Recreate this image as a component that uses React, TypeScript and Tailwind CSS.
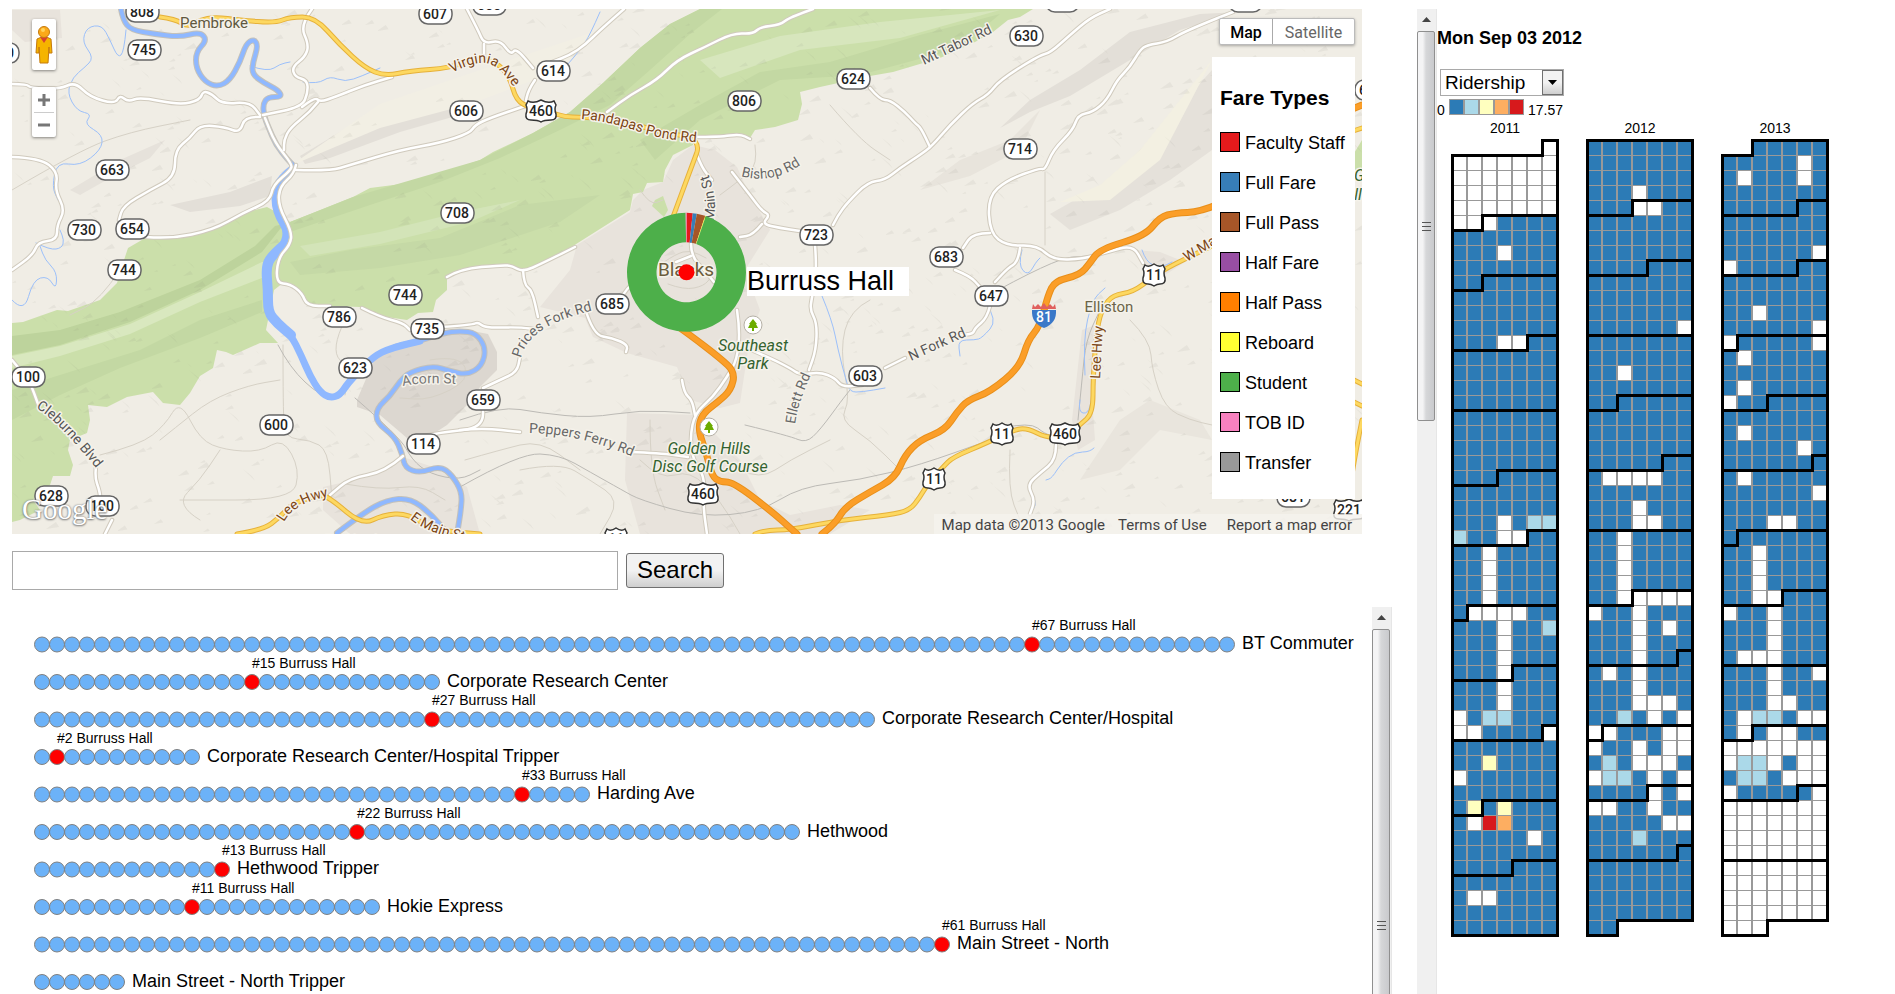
import { useMemo, useState } from "react";

type Point = [number, number];

type Route = {
  name: string;
  stops: number;
  active?: number;
};

const ROUTES: Route[] = [
  { name: "BT Commuter", stops: 80, active: 67 },
  { name: "Corporate Research Center", stops: 27, active: 15 },
  { name: "Corporate Research Center/Hospital", stops: 56, active: 27 },
  { name: "Corporate Research Center/Hospital Tripper", stops: 11, active: 2 },
  { name: "Harding Ave", stops: 37, active: 33 },
  { name: "Hethwood", stops: 51, active: 22 },
  { name: "Hethwood Tripper", stops: 13, active: 13 },
  { name: "Hokie Express", stops: 23, active: 11 },
  { name: "Main Street - North", stops: 61, active: 61 },
  { name: "Main Street - North Tripper", stops: 6 },
];

const FARE_TYPES = [
  { label: "Faculty Staff", color: "bg-[#e41a1c]" },
  { label: "Full Fare", color: "bg-[#377eb8]" },
  { label: "Full Pass", color: "bg-[#a65628]" },
  { label: "Half Fare", color: "bg-[#984ea3]" },
  { label: "Half Pass", color: "bg-[#ff7f00]" },
  { label: "Reboard", color: "bg-[#ffff33]" },
  { label: "Student", color: "bg-[#4daf4a]" },
  { label: "TOB ID", color: "bg-[#f781bf]" },
  { label: "Transfer", color: "bg-[#999999]" },
];

// fare share around the ring, in degrees
const SLICES = [
  { from: 0, to: 6, color: "#e41a1c" },
  { from: 6, to: 10, color: "#377eb8" },
  { from: 10, to: 18.3, color: "#a65628" },
  { from: 18.3, to: 19, color: "#ffff33" },
  { from: 19, to: 359.2, color: "#4daf4a" },
  { from: 359.2, to: 360, color: "#f781bf" },
];

const SCALE: Record<string, string> = {
  b: "#2c7bb6",
  l: "#abd9e9",
  y: "#ffffbf",
  o: "#fdae61",
  r: "#d7191c",
  w: "#ffffff",
};

const EMPTY = "wwwwwww";

// week -> one letter per weekday; weeks that are left out are all "b"
const YEARS: { year: number; weeks: Record<number, string> }[] = [
  {
    year: 2011,
    weeks: {
      0: EMPTY, 1: EMPTY, 2: EMPTY, 3: EMPTY, 4: EMPTY,
      5: "wwwbbbb", 7: "bbbwbbb", 13: "bbbwwbb", 25: "bbbwbll", 26: "lbbwwbb",
      27: "bbwbbbb", 28: "bbwbbbb", 29: "bbwbbbb", 30: "bbwbbbb", 31: "bwwwwbb",
      32: "bbbwbbl", 33: "bbbwbbb", 34: "bbbwbbb", 35: "bbbwbbb", 36: "bbbwbbb",
      37: "bbbwbbb", 38: "wbllbbb", 39: "wwbbbbw", 41: "bbybbbb", 42: "wbbbbbb",
      44: "bybybbb", 45: "bwrobbb", 46: "bbbbbwb", 50: "bwwbbbb",
    },
  },
  {
    year: 2012,
    weeks: {
      3: "bbbwbbb", 4: "bbbwwbb", 12: "bbbbbbw", 15: "bbwbbbb", 22: "bwwwwbb",
      24: "bbbwbbb", 25: "bbbwwbb", 26: "bbwbbbb", 27: "bbwbbbb", 28: "bbwbbbb",
      29: "bbwbbbb", 30: "bbwwwww", 31: "wbbwbbb", 32: "bbbwbwb", 33: "bbbwbbb",
      34: "bbbwbbb", 35: "bwbwbbb", 36: "bbbwbbb", 37: "bbbwwwb", 38: "bblbwbw",
      39: "wwbbbww", 40: "wbbwbww", 41: "blbwwwb", 42: "wllbwbw", 43: "bbbbwbw",
      44: "wwbbwbb", 45: "bbbbbww", 46: "bbblbbb",
    },
  },
  {
    year: 2013,
    weeks: {
      1: "bbbbbwb", 2: "bwbbbwb", 7: "bbbbbbw", 8: "wbbbbbb", 11: "bbwbbbb",
      12: "bbbbbbw", 13: "wbbbbbw", 14: "bwbbbbb", 16: "bwbbbbb", 17: "wbbbbbb",
      19: "bwbbbbb", 20: "bbbbbwb", 22: "bwbbbbb", 23: "bbbbbbw", 25: "bbbwwbb",
      27: "bbwbbbb", 28: "bbwbbbb", 29: "bbwbbbb", 30: "bbwwbbb", 31: "wbbwbbb",
      32: "bbbwbbb", 33: "bbbwbbb", 34: "bwwwbbb", 35: "bbbwbbw", 36: "bbbwbbb",
      37: "bbbwwbb", 38: "bwllbww", 39: "bwbwwbb", 40: EMPTY, 41: "wllwbww",
      42: "bllbwww", 43: "wbbbbbw", 44: EMPTY, 45: EMPTY, 46: EMPTY, 47: EMPTY,
      48: EMPTY, 49: EMPTY, 50: EMPTY, 51: EMPTY, 52: EMPTY,
    },
  },
];

const CELL = 15;

function dayOfYear(d: Date) {
  return Math.round((d.getTime() - Date.UTC(d.getUTCFullYear(), 0, 1)) / 86400000);
}

function weekOf(d: Date) {
  const first = new Date(Date.UTC(d.getUTCFullYear(), 0, 1)).getUTCDay();
  return Math.floor((dayOfYear(d) + first) / 7);
}

function monthPath(year: number, month: number) {
  const a = new Date(Date.UTC(year, month, 1));
  const b = new Date(Date.UTC(year, month + 1, 0));
  const w0 = weekOf(a) * CELL;
  const w1 = weekOf(b) * CELL;
  const d0 = a.getUTCDay() * CELL;
  const d1 = (b.getUTCDay() + 1) * CELL;
  const right = 7 * CELL;
  return `M${d0} ${w0}H${right}V${w1}H${d1}V${w1 + CELL}H0V${w0 + CELL}H${d0}Z`;
}

function YearCalendar({ year, weeks }: { year: number; weeks: Record<number, string> }) {
  const days = useMemo(() => {
    const out: { key: number; x: number; y: number; fill: string }[] = [];
    for (let i = 0; i < 366; i++) {
      const d = new Date(Date.UTC(year, 0, 1 + i));
      if (d.getUTCFullYear() !== year) break;
      const w = weekOf(d);
      const c = d.getUTCDay();
      out.push({ key: i, x: c * CELL, y: w * CELL, fill: SCALE[weeks[w]?.[c] ?? "b"] });
    }
    return out;
  }, [year, weeks]);

  return (
    <svg width={135} height={820} className="shrink-0" role="img" aria-label={`${year}`}>
      <text x={68} y={13} textAnchor="middle" className="text-[14px]">
        {year}
      </text>
      <g transform="translate(15 20)">
        {days.map((d) => (
          <rect key={d.key} x={d.x - 1} y={d.y} width={17} height={16} fill="#999" />
        ))}
        {days.map((d) => (
          <rect key={d.key} x={d.x + 1} y={d.y + 1} width={13} height={14} fill={d.fill} />
        ))}
        <g transform="translate(.5 .5)" fill="none" stroke="#000" strokeWidth={3}>
          {Array.from({ length: 12 }, (_, m) => (
            <path key={m} d={monthPath(year, m)} />
          ))}
        </g>
      </g>
    </svg>
  );
}

function ScaleLegend() {
  return (
    <svg width={150} height={21} className="mt-[3px] block text-[14px]" role="img" aria-label="Scale from 0 to 17.57">
      <text x={0} y={16}>0</text>
      <rect x={12} y={0} width={75} height={16} fill="#999" />
      {["b", "l", "y", "o", "r"].map((k, i) => (
        <rect key={k} x={13 + i * 15} y={1} width={13} height={14} fill={SCALE[k]} />
      ))}
      <text x={91} y={16}>17.57</text>
    </svg>
  );
}

function Scrollbar({ size }: { size: "page" | "routes" }) {
  return (
    <div aria-hidden className="flex w-5 shrink-0 flex-col overflow-hidden border-r border-[#e6e6e6] bg-[#f0f0f0]">
      <div className="flex h-5 w-[18px] shrink-0 items-center justify-center">
        <svg width={9} height={5} viewBox="0 0 9 5">
          <path d="M0 5L4.500 0L9 5Z" fill="#444" />
        </svg>
      </div>
      <div
        className={`mt-0.5 flex w-[18px] shrink-0 flex-col items-center justify-center gap-[3px] rounded-[2px] border border-[#8f8f8f] bg-linear-to-r from-[#f4f4f5] from-30% via-[#d6d7d9] via-50% to-[#c9cacd] ${
          size === "page" ? "h-[390px]" : "h-[592px]"
        }`}
      >
        <span className="h-px w-[9px] bg-[#555]" />
        <span className="h-px w-[9px] bg-[#555]" />
        <span className="h-px w-[9px] bg-[#555]" />
      </div>
    </div>
  );
}

function line(points: string) {
  return points
    .trim()
    .split(/\s+/)
    .map((p) => p.split(",").map(Number) as Point);
}

// rounded polyline through the midpoints
function smooth(points: string) {
  const p = line(points);
  let d = `M${p[0]}`;
  for (let i = 1; i < p.length - 1; i++) {
    const mid = [(p[i][0] + p[i + 1][0]) / 2, (p[i][1] + p[i + 1][1]) / 2];
    d += `Q${p[i]} ${mid}`;
  }
  return d + `L${p[p.length - 1]}`;
}

const FOREST =
  "123,263 128,248 147,237 170,239 213,230 243,213 267,207 280,214 290,222 313,213 353,197 370,188 417,182 443,173 480,160 493,152 533,133 570,112 603,83 640,48 670,24 700,9 1033,9 1020,17 1008,20 993,32 975,42 940,58 893,72 870,76 820,87 800,92 802,104 798,120 775,127 755,130 750,138 740,135 693,137 693,145 673,155 665,170 663,182 647,183 643,192 633,194 630,210 573,246 545,263 527,270 503,265 460,269 447,277 447,290 436,300 433,312 418,313 407,320 380,316 360,307 307,305 300,290 283,283 274,290 266,330 278,343 260,343 233,355 226,352 217,350 213,368 200,376 190,393 180,405 163,403 153,392 127,397 107,407 88,405 90,420 87,433 70,440 68,450 73,465 70,476 53,476 50,485 40,490 33,500 40,510 20,520 12,522 12,323 23,322 57,310 68,311 100,300 117,283";

const TOWNS = [
  "693,145 673,160 663,182 643,190 633,200 630,212 577,245 570,270 540,307 585,318 593,337 627,353 677,367 690,400 720,408 740,403 750,337 760,310 745,270 770,230 745,185 737,167 715,150",
  "627,413 697,415 740,460 760,500 790,515 840,505 870,510 830,534 640,534 625,480",
  "323,487 367,477 403,457 433,467 467,487 480,534 350,534 323,510",
  "12,10 60,10 62,38 25,42 12,30",
  "1133,250 1160,252 1185,262 1165,275 1140,262",
  "1082,330 1095,325 1092,400 1095,440 1078,450 1072,420",
];

const PLANT =
  "357,400 377,353 427,340 467,330 488,334 497,352 497,370 480,387 470,402 447,425 430,436 407,438 380,415 357,407";

const RIDGES = [
  { d: "12,336 60,330 120,312 200,280 255,246 275,226 284,224 262,252 200,290 130,322 60,345 12,355", fill: "#bdd39c" },
  { d: "12,390 60,375 140,350 200,320 262,300 262,312 200,338 120,368 60,395 12,420", fill: "#c3d8a3" },
  { d: "480,160 533,133 570,112 603,83 640,48 670,24 700,9 722,9 690,34 650,70 610,105 560,130 500,158 440,182 370,205 290,232 290,222 353,197", fill: "#c3d8a3" },
  { d: "640,140 700,105 760,72 830,62 920,35 1000,14 960,48 860,75 780,80 700,120 655,160", fill: "#c3d8a3" },
  { d: "290,262 350,250 440,238 520,205 600,195 560,222 460,255 380,268 300,275", fill: "#c5d9a6" },
  { d: "12,356 60,346 130,324 200,292 262,262 272,262 262,278 200,302 130,334 60,356 12,368", fill: "#d9e8bf" },
  { d: "700,60 780,36 880,22 1000,10 900,38 800,50 720,78", fill: "#d7e6bd" },
  { d: "300,246 380,232 460,212 520,200 470,222 380,244 310,256", fill: "#d3e4b8" },
  { d: "300,156 340,132 400,118 450,106 470,112 400,132 330,158 305,164", fill: "#e3dfd8" },
  { d: "170,205 230,192 272,176 270,196 240,206 190,212", fill: "#e3dfd8" },
  { d: "70,190 120,160 165,140 150,158 110,178 80,195", fill: "#e6e2db" },
  { d: "1000,128 1030,100 1080,70 1130,32 1200,14 1240,12 1180,30 1120,66 1070,96 1030,112", fill: "#e3dfd8" },
  { d: "1050,214 1110,180 1150,140 1212,70 1212,150 1170,180 1120,210 1070,230", fill: "#e5e1da" },
  { d: "920,190 960,160 1010,140 1040,110 1020,150 970,176", fill: "#e8e4dc" },
  { d: "1080,480 1120,420 1150,400 1200,420 1212,440 1160,430 1120,470", fill: "#e9e5dd" },
  { d: "1060,202 1100,185 1140,150 1212,60 1160,160 1110,200", fill: "#f3f0e2" },
  { d: "290,166 380,104 480,70 600,30 560,70 470,104 380,128", fill: "#f2efe4" },
];

const RIVER_WIDE =
  "293,168 280,178 275,192 275,205 279,218 287,230 284,245 271,256 266,268 268,290 268,312 277,323 291,335 301,355 310,376 320,392 330,398 340,395 348,383 362,368 377,354 395,347 420,341";

const RIVERS = [
  "121,9 123,20 131,30 155,34 180,37 200,32 207,40 196,52 196,68 205,82 218,87 230,80 240,62 246,44 254,39 258,46 253,62 252,74 264,83 278,90 282,97 268,97 263,104 264,116 268,126 276,145 288,160 294,166",
  "395,347 420,341 443,333 460,331 476,333 486,348 482,366 467,375 450,371 433,366 410,372 400,381 390,396 377,408 376,422 395,437 402,453 405,468 420,473 440,466 452,475 462,492 461,510 457,534",
  "337,533 363,513 387,500 410,498 430,513 447,533",
];

const STREAMS = [
  "126,30 124,52 118,58 110,40 102,25 87,27 82,42 94,58 84,68 73,77 67,93 77,111 92,114 84,124 103,135 101,150 80,166 57,162 52,187 58,200",
  "36,243 50,250 62,248 64,240 60,230",
  "12,300 24,313 33,280 48,276 56,290 57,272 45,260 40,246",
  "250,66 268,72 280,64 290,62",
  "303,82 318,84 330,76 345,82 362,76 380,68",
  "600,12 590,35 580,50 568,64",
  "822,296 832,320 838,350 846,380 850,392 862,392 885,388",
  "1022,250 1018,265 1028,276 1036,262 1040,258",
  "1142,250 1146,262 1160,268 1172,262",
  "1085,375 1083,340 1092,300 1105,288",
  "1094,448 1090,452 1075,452 1062,462 1052,478 1046,480",
  "1080,400 1078,412 1088,414 1092,398",
  "1030,492 1038,502 1030,514",
  "986,304 998,320 982,338 975,340 958,340 960,356",
];

const MINOR = [
  "12,190 80,150 130,132 190,120",
  "100,455 140,445 165,425 180,400 200,440 225,450 260,452 283,438 300,470 292,500 180,500",
  "283,345 283,410 285,438 310,440 328,450 332,500",
  "160,440 175,428 210,400 250,385 280,380",
  "120,270 100,300 70,315",
  "345,320 330,350 350,370 345,395",
  "200,520 175,505 200,480 220,450",
  "520,470 560,462 590,480 620,500 600,534",
  "465,460 500,450 540,440 580,470",
  "640,190 650,205 663,200",
  "755,145 758,165 740,180 720,195",
  "830,105 860,140 890,160",
  "870,300 850,310 840,350 850,400 840,420 870,440 900,470",
  "1045,172 1045,245",
  "1130,320 1150,340 1152,370 1165,408 1190,420 1212,425",
  "1010,450 1008,490 1020,520",
  "740,470 760,480 790,460 830,440",
  "640,460 660,480 690,470 720,500 740,534",
  "650,420 650,470 665,510",
  "345,484 380,490 420,485 445,500",
  "430,360 460,355 470,380 430,400 400,398",
  "664,262 676,254 690,250 706,258",
  "668,284 684,290 704,286 712,276",
];

const RAILS = [
  "460,420 500,406 540,413 590,418 640,410 690,413",
  "745,425 790,436 806,443 820,430 842,400 850,390",
  "460,487 520,453 560,455 590,472 622,490 640,500 700,517 760,512 800,487 860,480 920,465 990,440",
  "355,398 400,437 412,460 430,474 460,480 480,470",
  "278,345 290,368 320,396 340,398 360,372",
  "1002,428 1030,422 1045,434 1055,436",
  "1078,420 1082,380 1086,340 1100,310",
  "980,300 1055,258 1090,256",
];

const ROADS = [
  "12,84 27,84 30,88 60,89 75,82 90,97 115,104 120,95 128,102 140,97 180,105 200,100 203,91 212,94 222,104 250,102 260,115",
  "260,117 245,116 240,133 225,127 200,125 190,138 175,150 175,177 150,190 123,206 119,220",
  "146,237 170,239 213,230 243,213 270,201 273,185 291,170 292,164 275,143 265,118",
  "296,165 294,174 280,186 278,205 292,232 290,245 278,258 276,283 290,284 302,293 307,306 330,306",
  "312,9 300,25 309,45 305,57 292,67 295,77 307,80 308,92 302,107 263,115",
  "302,107 315,97 320,102 335,97 365,85 392,77",
  "318,102 310,112 290,128 284,140 284,150",
  "296,170 330,171 350,165 400,150 440,143 470,133 475,125 490,118 525,106",
  "12,157 40,158 58,172 55,190 65,210 57,225 57,240 38,242 33,255 12,270",
  "467,9 478,30 484,44 500,40 511,55 516,48 533,68",
  "484,44 484,58",
  "624,9 600,30 585,45 570,55 552,62",
  "535,80 528,90 525,106",
  "813,9 790,17 780,25 760,27 753,34 733,33 705,47 677,60 657,80 630,95 607,112",
  "693,137 720,137 740,134 750,139",
  "870,88 880,100 890,100 905,112 915,123 921,128 930,147",
  "833,225 838,215 848,202 868,182 885,180 900,168 920,155 932,146 950,125 973,103 988,95 1000,80 1040,55 1050,53 1070,35 1090,18 1110,9",
  "732,172 750,195 762,211 770,215 762,224 780,228 800,231",
  "762,224 753,235 740,237",
  "815,245 817,270 812,297 810,310 817,323 816,350 809,370",
  "1233,12 1187,30 1167,42 1147,45 1140,50 1130,67 1117,80 1107,100 1093,112 1078,115 1073,130 1053,150 1045,170 1040,168 1007,180 988,197 990,233 1007,246 1037,245 1053,260 1083,259 1107,252 1133,245 1143,263",
  "990,233 973,233 963,248",
  "1020,248 1018,262 1008,268 995,282",
  "955,270 970,276 980,287",
  "990,306 987,318 975,328 973,334 960,335",
  "740,345 770,358 790,368 800,375 820,372 835,378 842,387 862,385",
  "885,368 905,358",
  "697,155 702,168 712,180",
  "691,244 691,256 706,272 714,282",
  "691,256 676,262",
  "737,310 740,330 737,360 727,377 713,397 695,413 690,437 693,460 705,477 703,505 707,534",
  "460,430 483,428 520,432",
  "403,456 385,472 350,478 330,495",
  "423,436 443,432 483,428 483,400",
  "630,452 660,453 688,457",
  "483,388 500,380 517,372 520,357",
  "585,308 593,335 613,338 628,345 626,352",
  "620,300 628,286 640,280",
  "440,327 472,325 478,322 485,328 520,327 540,330",
  "523,270 524,285 532,290 538,317",
  "447,277 460,269 503,265 512,266 523,272 543,263 575,247",
  "362,308 380,317 403,323 410,330",
  "682,380 684,393 692,400 695,415",
  "12,360 22,372 30,382 38,404",
  "97,460 94,475 100,492 100,500",
  "112,520 105,534",
  "1056,445 1056,460 1040,473 1027,485 1035,500 1030,514",
];

const HIGHWAYS = [
  "160,17 175,19 188,27 200,20 215,17 240,20 275,23 290,17 315,17 340,45 365,68 385,76 410,71 450,68 475,58 497,62 510,78 516,100 530,108 550,112 565,117 580,117 620,120 660,132 692,137 699,147 694,160 670,225",
  "755,534 765,530 790,530 840,520 890,515 910,510 920,497 927,485 943,467 953,457 987,443 1013,430 1027,428 1047,438 1065,436 1080,425 1093,413 1093,377 1097,327 1103,307 1113,295 1133,292 1153,277 1167,268 1183,260 1220,242",
  "237,534 263,530 280,517 293,503 320,495 330,498 362,525 383,515 407,513 433,530 480,534",
  "1350,378 1362,384",
  "1350,400 1362,406",
  "1362,420 1355,455 1348,500",
  "1350,132 1362,128",
];

const INTERSTATES = [
  "680,328 690,335 720,358 735,372 731,390 718,402 702,414 698,430 707,455 712,476 720,482 733,482 770,510 797,534",
  "822,534 835,524 845,507 870,492 895,478 905,455 920,440 945,430 957,412 968,400 990,392 1020,367 1028,340 1040,326 1048,295 1055,281 1080,275 1090,263 1100,249 1145,236 1160,217 1175,213 1200,212 1240,195",
  "1350,110 1362,105",
];

const OVALS: [string, number, number][] = [
  ["808", 142, 12], ["745", 144, 50], ["730", 2, 53], ["607", 435, 14], ["606", 466, 111],
  ["663", 112, 170], ["730", 84, 230], ["654", 132, 229], ["744", 124, 270], ["708", 457, 213],
  ["614", 553, 71], ["655", 489, 5], ["624", 853, 79], ["806", 744, 101], ["723", 816, 235],
  ["683", 946, 257], ["630", 1026, 36], ["714", 1020, 149], ["647", 991, 296], ["744", 405, 295],
  ["786", 339, 317], ["735", 427, 329], ["623", 355, 368], ["100", 28, 377], ["600", 276, 425],
  ["114", 423, 444], ["628", 51, 496], ["100", 102, 506], ["685", 612, 304], ["659", 483, 400],
  ["603", 865, 376], ["681", 1293, 497], ["697", 1062, 2], ["697", 1245, 2], ["648", 1371, 90],
];

const US_SHIELDS: [string, number, number][] = [
  ["460", 541, 111], ["460", 703, 494], ["11", 1154, 275], ["11", 1002, 434],
  ["11", 934, 479], ["460", 1065, 434], ["221", 1349, 510], ["11", 616, 539],
];

const CURVED: { id: string; text: string; path: string; color: string }[] = [
  { id: "virginia", text: "Virginia Ave", path: "M452 73Q472 62 486 63Q500 65 520 96", color: "#7b4413" },
  { id: "pandapas", text: "Pandapas Pond Rd", path: "M581 119Q608 121 634 130Q662 141 710 143", color: "#7b4413" },
  { id: "bishop", text: "Bishop Rd", path: "M741 176Q776 186 810 158", color: "#666" },
  { id: "main", text: "Main St", path: "M713 221Q720 195 702 160", color: "#555" },
  { id: "tabor", text: "Mt Tabor Rd", path: "M924 65L1005 27", color: "#555" },
  { id: "cleburne", text: "Cleburne Blvd", path: "M36 408Q58 420 104 478", color: "#555" },
  { id: "leehwy", text: "Lee Hwy", path: "M284 522Q294 502 336 495", color: "#7b4413" },
  { id: "emain", text: "E Main St", path: "M410 519Q430 536 485 545", color: "#7b4413" },
  { id: "acorn", text: "Acorn St", path: "M403 386Q425 381 470 385", color: "#777" },
  { id: "prices", text: "Prices Fork Rd", path: "M521 358Q528 324 600 309", color: "#666" },
  { id: "peppers", text: "Peppers Ferry Rd", path: "M529 433Q588 434 648 464", color: "#666" },
  { id: "ellett", text: "Ellett Rd", path: "M795 424Q798 400 818 360", color: "#666" },
  { id: "nfork", text: "N Fork Rd", path: "M911 361L980 330", color: "#555" },
  { id: "lee2", text: "Lee Hwy", path: "M1100 379L1104 310", color: "#7b4413" },
  { id: "wmain", text: "W Main St", path: "M1187 262L1260 217", color: "#7b4413" },
];

// small hill-shade strokes scattered over the terrain
function useHillMarks() {
  return useMemo(() => {
    let seed = 7;
    const rnd = () => {
      seed = (seed * 16807) % 2147483647;
      return seed / 2147483647;
    };
    return Array.from({ length: 1100 }, () => {
      const x = Math.round(12 + rnd() * 1350);
      const y = Math.round(9 + rnd() * 525);
      const l = 3 + rnd() * 7;
      const dir = rnd() > 0.3 ? -0.7 : 0.8;
      return `M${x} ${y}l${l.toFixed(1)} ${(l * dir).toFixed(1)}l${(l / 3).toFixed(1)} ${(l / 2).toFixed(1)}z`;
    }).join("");
  }, []);
}

function arc(from: number, to: number, outer: number, inner: number) {
  const at = (deg: number, r: number) => {
    const a = (deg * Math.PI) / 180;
    return `${(Math.sin(a) * r).toFixed(2)} ${(-Math.cos(a) * r).toFixed(2)}`;
  };
  const large = to - from > 180 ? 1 : 0;
  return `M${at(from, outer)}A${outer} ${outer} 0 ${large} 1 ${at(to, outer)}L${at(to, inner)}A${inner} ${inner} 0 ${large} 0 ${at(from, inner)}Z`;
}

function Strokes({ paths, casing, color, width }: { paths: string[]; casing: string; color: string; width: number }) {
  return (
    <g fill="none" strokeLinecap="round" strokeLinejoin="round">
      {paths.map((p, i) => (
        <path key={i} d={smooth(p)} stroke={casing} strokeWidth={width + 2} />
      ))}
      {paths.map((p, i) => (
        <path key={i} d={smooth(p)} stroke={color} strokeWidth={width} />
      ))}
    </g>
  );
}

function ParkPin({ x, y }: { x: number; y: number }) {
  return (
    <g transform={`translate(${x} ${y})`}>
      <circle r={9} fill="#fff" stroke="#b5b0a6" />
      <path d="M0 -6L4 -1H3L5 3H1V6H-1V3H-5L-3 -1H-4Z" fill="#6cac00" />
    </g>
  );
}

function MapCanvas() {
  const marks = useHillMarks();

  return (
    <svg
      viewBox="12 9 1350 525"
      preserveAspectRatio="xMidYMid slice"
      className="block h-full w-full"
      role="img"
      aria-label="Map of Blacksburg"
      fontFamily="Roboto, sans-serif"
    >
      <rect x={0} y={0} width={1400} height={560} fill="#f0ede5" />
      {TOWNS.map((t, i) => (
        <polygon key={i} points={t} fill="#e8e3dc" />
      ))}
      <polygon points={PLANT} fill="#dcd7d0" />
      <polygon points={FOREST} fill="#cbdfaa" />
      <polygon points="655,200 663,196 668,210 664,217 652,206" fill="#cbdfaa" />
      <polygon points="1350,160 1362,140 1362,170 1354,170" fill="#cbdfaa" />
      {RIDGES.map((r, i) => (
        <polygon key={i} points={r.d} fill={r.fill} />
      ))}
      <path d={marks} fill="#8a8678" opacity={0.09} />

      <g fill="none" strokeLinejoin="round" strokeLinecap="round">
        {MINOR.map((p, i) => (
          <path key={i} d={smooth(p)} stroke="#d6d1c6" strokeWidth={1} />
        ))}
        {RAILS.map((p, i) => (
          <path key={i} d={smooth(p)} stroke="#bcbab5" strokeWidth={1} />
        ))}
        {STREAMS.map((p, i) => (
          <path key={i} d={smooth(p)} stroke="#9cc0fa" strokeWidth={1} />
        ))}
        {RIVERS.map((p, i) => (
          <path key={i} d={smooth(p)} stroke="#c4c1ba" strokeWidth={6} />
        ))}
        {RIVERS.map((p, i) => (
          <path key={i} d={smooth(p)} stroke="#8fb8ff" strokeWidth={4} />
        ))}
        <path d={smooth(RIVER_WIDE)} stroke="#8fb8ff" strokeWidth={7} />
        <path d={smooth("284,245 271,256 266,268 268,290 268,312 277,323 291,335")} stroke="#8fb8ff" strokeWidth={10} />
      </g>

      <Strokes paths={ROADS} casing="#d0cabd" color="#fff" width={2.5} />
      <Strokes paths={HIGHWAYS} casing="#e6b13a" color="#fdd861" width={3} />
      <Strokes paths={INTERSTATES} casing="#e88f1a" color="#fb9e28" width={5} />

      {CURVED.map((c) => (
        <g key={c.id}>
          <path id={c.id} d={c.path} fill="none" />
          <text fontSize={14} fill={c.color} stroke="#f5f2ea" strokeWidth={3} paintOrder="stroke" strokeLinejoin="round">
            <textPath href={`#${c.id}`}>{c.text}</textPath>
          </text>
        </g>
      ))}

      <g textAnchor="middle" stroke="#f5f2ea" strokeWidth={3} paintOrder="stroke" strokeLinejoin="round">
        <text x={214} y={28} fontSize={15} fill="#5f5840">Pembroke</text>
        <text x={1109} y={312} fontSize={15} fill="#6b6448">Elliston</text>
        <text x={351} y={546} fontSize={15} fill="#5f5840">Radford</text>
        <text x={686} y={276} fontSize={19} fill="#6b5c3c">Blacks</text>
        <g fontStyle="italic" fontSize={16} fill="#33622f">
          <text x={753} y={351}>Southeast</text>
          <text x={753} y={369}>Park</text>
          <text x={709} y={454}>Golden Hills</text>
          <text x={710} y={472}>Disc Golf Course</text>
          <text x={1362} y={181}>Gr</text>
          <text x={1358} y={200}>ll</text>
        </g>
      </g>
      <ParkPin x={753} y={325} />
      <ParkPin x={709} y={427} />

      <g fontSize={14} fontWeight={500} textAnchor="middle" fill="#222">
        {OVALS.map(([n, x, y], i) => (
          <g key={i}>
            <rect x={x - 16} y={y - 10} width={33} height={20} rx={9} fill="#fff" stroke="#666" strokeWidth={1.5} />
            <text x={x} y={y + 5}>{n}</text>
          </g>
        ))}
        {US_SHIELDS.map(([n, x, y], i) => {
          const w = n.length > 2 ? 15 : 11;
          return (
            <g key={i}>
              <path
                transform={`translate(${x} ${y})`}
                d={`M${-w + 2} -10Q${-w / 2} -7 0 -11Q${w / 2} -7 ${w - 2} -10L${w} -6Q${w - 2} -2 ${w} 3Q${w + 1} 9 ${w - 5} 9Q3 9 0 11Q-3 9 ${-w + 5} 9Q${-w - 1} 9 ${-w} 3Q${-w + 2} -2 ${-w} -6Z`}
                fill="#fff"
                stroke="#333"
                strokeWidth={1.5}
              />
              <text x={x} y={y + 5}>{n}</text>
            </g>
          );
        })}
        <g transform="translate(1044 315)">
          <path d="M-11 -11L-9 -8L-6 -11L-3 -8L0 -12L3 -8L6 -11L9 -8L11 -11L12 -6H-12Z" fill="#e0605e" />
          <path d="M-12 -5H12Q13 8 0 13Q-13 8 -12 -5Z" fill="#3a78c8" />
          <text x={0} y={7} fill="#fff">81</text>
        </g>
      </g>

      {/* fare ring for the selected stop */}
      <g transform="translate(686.500 272.300)">
        {SLICES.map((s) => (
          <path key={s.from} d={arc(s.from, s.to, 59.5, 30)} fill={s.color} />
        ))}
        <circle r={8} fill="#f00" />
      </g>
      <rect x={747} y={267} width={162} height={29} fill="#fff" />
      <text x={747} y={290} fontSize={27} fontFamily="'Liberation Sans', Arial, sans-serif">
        Burruss Hall
      </text>
    </svg>
  );
}

function MapPanel() {
  return (
    <section className="relative mr-[55px] h-[525px] shrink-0 overflow-hidden">
      <MapCanvas />

      <div className="absolute top-2.5 left-5 flex flex-col items-center gap-[17px]">
        <button
          type="button"
          aria-label="Street View"
          className="flex h-[51px] w-6 items-center justify-center rounded-[2px] bg-white shadow-[0_1px_3px_rgba(0,0,0,0.45)]"
        >
          <svg width={18} height={40} viewBox="0 0 18 40">
            <path d="M2 14Q9 10 16 14L17 28H14V22L13 38H5L4 22V28H1Z" fill="#f5b400" stroke="#c57a0c" />
            <path d="M5 12L9 18L13 12Z" fill="#d9432f" />
            <circle cx={9} cy={7} r={5.500} fill="#fba919" stroke="#c57a0c" />
            <circle cx={8} cy={5} r={2} fill="#ffd45c" />
          </svg>
        </button>
        <div className="flex w-6 flex-col items-center rounded-[2px] bg-white shadow-[0_1px_3px_rgba(0,0,0,0.45)]">
          <button type="button" aria-label="Zoom in" className="flex h-[25px] w-6 items-center justify-center">
            <svg width={12} height={12} viewBox="0 0 12 12">
              <path d="M0 6H12M6 0V12" stroke="#777" strokeWidth={3} />
            </svg>
          </button>
          <span className="h-px w-5 bg-[#ccc]" />
          <button type="button" aria-label="Zoom out" className="flex h-6 w-6 items-center justify-center">
            <svg width={12} height={12} viewBox="0 0 12 12">
              <path d="M0 6H12" stroke="#777" strokeWidth={3} />
            </svg>
          </button>
        </div>
      </div>

      <div className="absolute top-[9px] right-[7px] flex h-[27px] rounded-[2px] border border-[#bbb] bg-white font-[Roboto,sans-serif] text-[16px] leading-[27px] shadow-[0_1px_3px_rgba(0,0,0,0.3)]">
        <button type="button" className="w-[53px] border-r border-[#aaa] font-medium">Map</button>
        <button type="button" className="w-[81px] text-[#666]">Satellite</button>
      </div>

      <div className="absolute top-12 right-[7px] h-[442px] w-[143px] bg-white px-2">
        <h3 className="mt-[29px] text-[21px] leading-6 font-bold">Fare Types</h3>
        <ul className="mt-[22px] flex flex-col gap-5">
          {FARE_TYPES.map((f) => (
            <li key={f.label} className="flex h-5 items-center gap-[5px] text-[18px] leading-[22px] whitespace-nowrap">
              <span className={`h-5 w-5 shrink-0 border border-black ${f.color}`} />
              <span className="pt-0.5">{f.label}</span>
            </li>
          ))}
        </ul>
      </div>

      <div className="absolute bottom-0 left-2.5 font-['Liberation_Serif',serif] text-[29px] leading-[50px] text-white [text-shadow:0_0_2px_#777,0_1px_2px_#777]">
        Google
      </div>
      <div className="absolute right-0 bottom-0 flex h-5 gap-[13px] bg-[#f5f3ee]/80 pr-2.5 pl-2 font-[Roboto,sans-serif] text-[15px] leading-[22px] text-[#444]">
        <span>Map data ©2013 Google</span>
        <a href="#terms">Terms of Use</a>
        <a href="#report" className="ml-[7px]">Report a map error</a>
      </div>
    </section>
  );
}

function RoutesChart() {
  return (
    <svg className="h-[420px] min-w-0 flex-1 overflow-hidden" role="img" aria-label="Stops by route">
      {ROUTES.map((r, row) => {
        const cy = 37.5 * (row + 1);
        const cx = (i: number) => 30 + i * 15;
        return (
          <g key={r.name}>
            {Array.from({ length: r.stops }, (_, i) => (
              <circle
                key={i}
                cx={cx(i)}
                cy={cy}
                r={7.5}
                fill={i + 1 === r.active ? "#f00" : "#6cb2f8"}
                stroke="#808080"
              />
            ))}
            {r.active && (
              <text x={cx(r.active - 1)} y={Math.floor(cy) - 14} className="text-[14px]">
                #{r.active} Burruss Hall
              </text>
            )}
            <text x={cx(r.stops)} y={Math.floor(cy) + 5} className="text-[18px]">
              {r.name}
            </text>
          </g>
        );
      })}
    </svg>
  );
}

export default function App() {
  const [query, setQuery] = useState("");
  const [metric, setMetric] = useState("Ridership");

  return (
    <div className="flex h-screen overflow-hidden bg-white pt-[9px] font-['Liberation_Sans',Arial,sans-serif] text-black">
      <main className="flex min-w-0 flex-1 flex-col pl-3">
        <MapPanel />

        <form className="mt-[17px] flex shrink-0 items-center gap-2" onSubmit={(e) => e.preventDefault()}>
          <input
            type="text"
            aria-label="Search stops"
            value={query}
            onChange={(e) => setQuery(e.target.value)}
            className="h-[39px] w-[606px] border border-[#a9a9a9] px-1 text-[24px]"
          />
          <button
            type="submit"
            className="h-[35px] w-[98px] rounded-[3px] border border-[#707070] bg-linear-to-b from-[#f2f2f2] from-50% to-[#cfcfcf] to-100% pb-0.5 text-[24px] leading-[31px]"
          >
            Search
          </button>
        </form>

        <section className="mt-[17px] mr-[25px] flex min-h-0 flex-1">
          <RoutesChart />
          <Scrollbar size="routes" />
        </section>
      </main>

      <Scrollbar size="page" />

      <aside className="w-[458px] shrink-0">
        <h1 className="mt-[19px] text-[18px] leading-5 font-bold">Mon Sep 03 2012</h1>
        <div className="relative mt-[21px] ml-[3px] h-[27px] w-[124px]">
          <select
            aria-label="Measure"
            value={metric}
            onChange={(e) => setMetric(e.target.value)}
            className="block h-full w-full appearance-none border border-[#a9a9a9] bg-white pl-1 text-[19px] leading-6"
          >
            <option>Ridership</option>
          </select>
          <span className="pointer-events-none absolute top-px right-px flex h-[25px] w-[21px] items-center justify-center border border-[#707070] bg-linear-to-b from-[#f2f2f2] from-50% to-[#cfcfcf]">
            <svg width={9} height={5} viewBox="0 0 9 5">
              <path d="M0 0H9L4.500 5Z" fill="#000" />
            </svg>
          </span>
        </div>
        <ScaleLegend />
        <div className="flex">
          {YEARS.map((y) => (
            <YearCalendar key={y.year} year={y.year} weeks={y.weeks} />
          ))}
        </div>
      </aside>
    </div>
  );
}
